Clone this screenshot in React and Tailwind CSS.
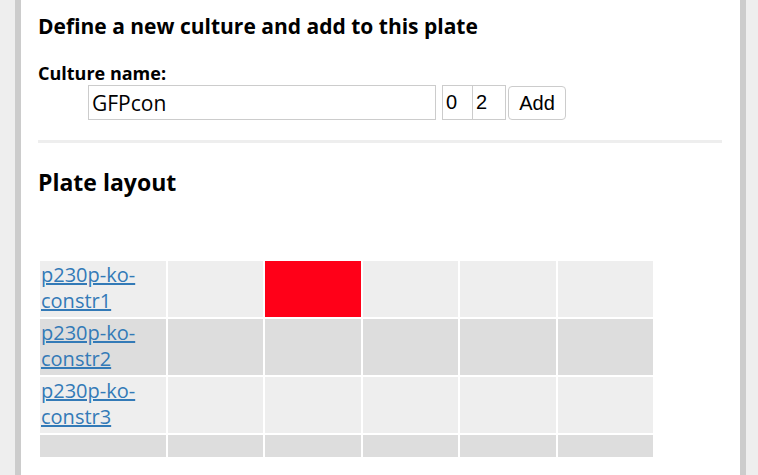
import React from 'react';

const rows = [
  { name: 'p230p-ko-constr1', filled: [1] },
  { name: 'p230p-ko-constr2', filled: [] },
  { name: 'p230p-ko-constr3', filled: [] },
];

const cols = [0, 1, 2, 3, 4];

export default function App() {
  return (
    <div className="flex h-[475px] w-[758px] overflow-hidden bg-[#eeeeee] font-['Open_Sans',sans-serif] text-black">
      <div className="w-[15px] shrink-0" />
      <div className="w-[6px] shrink-0 bg-[#cccccc]" />

      {/* Main panel */}
      <div className="flex-1 bg-white pl-[17px] pr-[18px]">
        <h3 className="mt-[12px] text-[21px] font-bold leading-[28px]">Define a new culture and add to this plate</h3>

        <div className="mt-[22px] text-[18px] font-bold leading-[22px]">Culture name:</div>
        <div className="mt-[1px] flex items-center pl-[50px]">
          <input
            readOnly
            value="GFPcon"
            className="h-[35px] w-[348px] border border-[#cccccc] px-[3px] font-['Open_Sans',sans-serif] text-[21px] outline-none"
          />
          <input
            readOnly
            value="0"
            className="ml-[6px] h-[35px] w-[31px] border border-[#cccccc] px-[3px] font-['Liberation_Sans',sans-serif] text-[20px] outline-none"
          />
          <input
            readOnly
            value="2"
            className="h-[35px] w-[33px] border border-l-0 border-[#cccccc] px-[3px] font-['Liberation_Sans',sans-serif] text-[20px] outline-none"
          />
          <button className="ml-[2px] h-[34px] w-[58px] rounded-[4px] border border-[#cccccc] bg-white font-['Liberation_Sans',sans-serif] text-[20px]">
            Add
          </button>
        </div>

        <hr className="mt-[20px] border-t-[3px] border-[#eeeeee]" />

        <h2 className="mt-[24px] text-[23px] font-bold leading-[30px]">Plate layout</h2>

        {/* Plate grid */}
        <div className="ml-[2px] mt-[64px] grid w-[613px] grid-cols-[126px_repeat(5,1fr)] gap-[2px]">
          {rows.map((r, i) => (
            <React.Fragment key={r.name}>
              <div className={`h-[56px] pl-[1px] pt-[1px] text-[20px] leading-[26px] ${i % 2 === 0 ? 'bg-[#eeeeee]' : 'bg-[#dddddd]'}`}>
                <a href="#" className="text-[#337ab7] underline">
                  p230p-ko-<br />
                  {r.name.replace('p230p-ko-', '')}
                </a>
              </div>
              {cols.map((c) => (
                <div
                  key={c}
                  className={`h-[56px] ${r.filled.includes(c) ? 'bg-[#ff0018]' : i % 2 === 0 ? 'bg-[#eeeeee]' : 'bg-[#dddddd]'}`}
                />
              ))}
            </React.Fragment>
          ))}
          <div className="h-[22px] bg-[#dddddd]" />
          {cols.map((c) => (
            <div key={c} className="h-[22px] bg-[#dddddd]" />
          ))}
        </div>
      </div>

      <div className="w-[6px] shrink-0 bg-[#cccccc]" />
      <div className="w-[12px] shrink-0" />
    </div>
  );
}
